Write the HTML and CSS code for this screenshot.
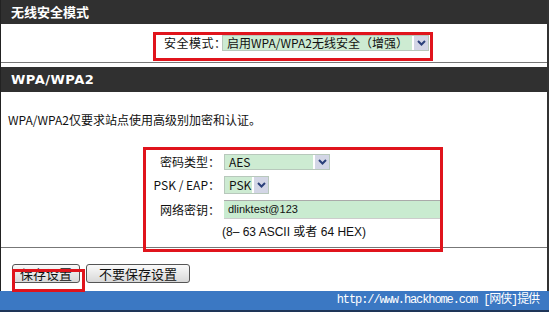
FILE: index.html
```html
<!DOCTYPE html>
<html lang="zh-CN">
<head>
  <meta charset="UTF-8">
  <title>无线安全模式</title>
  <link rel="stylesheet" href="styles.css">
</head>
<body>
  <div class="page">
    <div class="bar">无线安全模式</div>
    <div class="section mode">
      <div class="mark mode-box">
        <span class="label">安全模式：</span>
        <div class="select mode-select">
          <span class="value">启用WPA/WPA2无线安全（增强）</span>
          <span class="arrow"><svg width="9" height="6" viewBox="0 0 9 6"><path d="M1 1 L4.5 4.5 L8 1" fill="none" stroke="#2a3f7a" stroke-width="2"/></svg></span>
        </div>
      </div>
    </div>

    <div class="bar bar-latin">WPA/WPA2</div>
    <p class="desc">WPA/WPA2仅要求站点使用高级别加密和认证。</p>

    <div class="section fields">
      <div class="mark fields-box">
        <div class="row">
          <span class="label">密码类型：</span>
          <div class="select cipher">
            <span class="value">AES</span>
            <span class="arrow"><svg width="9" height="6" viewBox="0 0 9 6"><path d="M1 1 L4.5 4.5 L8 1" fill="none" stroke="#2a3f7a" stroke-width="2"/></svg></span>
          </div>
        </div>
        <div class="row">
          <span class="label">PSK / EAP：</span>
          <div class="select psk">
            <span class="value">PSK</span>
            <span class="arrow"><svg width="9" height="6" viewBox="0 0 9 6"><path d="M1 1 L4.5 4.5 L8 1" fill="none" stroke="#2a3f7a" stroke-width="2"/></svg></span>
          </div>
        </div>
        <div class="row">
          <span class="label">网络密钥：</span>
          <div class="input">dlinktest@123</div>
        </div>
        <div class="note">(8– 63 ASCII 或者 64 HEX)</div>
      </div>
    </div>

    <div class="actions">
      <button class="btn save">保存设置</button>
      <button class="btn">不要保存设置</button>
      <div class="mark save-mark"></div>
    </div>
  </div>
  <div class="footer">http://www.hackhome.com [网侠]提供</div>
</body>
</html>
```

FILE: styles.css
```css
* {
  box-sizing: border-box;
  margin: 0;
  padding: 0;
}

body {
  width: 549px;
  height: 312px;
  overflow: hidden;
  background-color: #fff;
  font-family: "Liberation Sans", "Noto Sans CJK SC", sans-serif;
  font-size: 12px;
  color: #111;
}

.page {
  position: relative;
  height: 291px;
  border-left: 1px solid #222;
  border-right: 2px solid #333;
}

.bar {
  height: 24px;
  padding-left: 10px;
  background-color: #303030;
  color: #fff;
  font-family: "Noto Sans CJK SC", sans-serif;
  font-weight: bold;
  font-size: 13px;
  line-height: 24px;
}

.bar-latin {
  height: 25px;
  margin-top: 4px;
  line-height: 26px;
  font-family: "DejaVu Sans", sans-serif;
  letter-spacing: 0.5px;
}

.section {
  border-bottom: 1px solid #777;
}

.mark {
  border: 3px solid #e0141c;
}

.mode {
  height: 39px;
  padding: 8px 0 0 152px;
}

.mode-box {
  display: flex;
  align-items: flex-start;
  width: 280px;
  height: 29px;
  padding: 0 0 0 8px;
}

.label {
  font-family: "Noto Sans CJK SC", sans-serif;
  font-size: 12px;
  line-height: 16px;
  color: #111;
  white-space: nowrap;
}

.mode-box .label {
  width: 58px;
  letter-spacing: 0.5px;
}

.select {
  display: flex;
  height: 16px;
  background-color: #cdebd2;
  border: 1px solid #b8c8bc;
}

.select .value {
  flex: 1;
  padding-left: 4px;
  font-family: "Noto Sans CJK SC", sans-serif;
  font-size: 12px;
  line-height: 14px;
  white-space: nowrap;
}

.select .arrow {
  display: flex;
  align-items: center;
  justify-content: center;
  width: 16px;
  background-color: #d3d6e6;
  border-left: 2px solid #fff;
}

.mode-select {
  width: 207px;
}

.desc {
  height: 55px;
  padding: 20px 0 0 7px;
  font-family: "Noto Sans CJK SC", sans-serif;
  font-size: 12px;
  line-height: 16px;
}

.fields {
  height: 101px;
  padding-left: 142px;
}

.fields-box {
  position: relative;
  width: 300px;
  height: 105px;
  margin-bottom: -5px;
}

.row {
  display: flex;
  align-items: center;
  height: 23px;
}

.row .label {
  width: 78px;
  padding-right: 4px;
  text-align: right;
}

.cipher {
  width: 106px;
}

.psk {
  width: 45px;
  height: 18px;
}

.psk .value {
  line-height: 16px;
}

.input {
  width: 216px;
  height: 19px;
  background-color: #c9ebd0;
  border-top: 1px solid #aaa;
  border-bottom: 1px solid #ccc;
  padding-left: 4px;
  font-family: "Liberation Sans", sans-serif;
  font-size: 11px;
  line-height: 17px;
}

.row:nth-child(3) {
  height: 27px;
}

.note {
  padding-left: 76px;
  font-family: "Liberation Sans", "Noto Sans CJK SC", sans-serif;
  font-size: 12px;
  line-height: 18px;
}

.actions {
  display: flex;
  gap: 6px;
  padding: 16px 0 0 11px;
}

.btn {
  height: 19px;
  border: 1px solid #555;
  border-radius: 3px;
  background: linear-gradient(#fafafa, #d8d8d8);
  font-family: "Noto Sans CJK SC", sans-serif;
  font-size: 13px;
  line-height: 16px;
  color: #111;
  white-space: nowrap;
}

.save {
  width: 68px;
}

.btn:last-of-type {
  width: 104px;
}

.save-mark {
  position: absolute;
  left: 11px;
  top: 269px;
  width: 73px;
  height: 23px;
}

.footer {
  height: 21px;
  padding-right: 10px;
  background-color: #3b78c3;
  border-bottom: 2px solid #1e3558;
  color: #fff;
  text-align: right;
  font-family: "Liberation Mono", "Noto Sans CJK SC", monospace;
  font-size: 12px;
  letter-spacing: -1.1px;
  line-height: 19px;
}
```
